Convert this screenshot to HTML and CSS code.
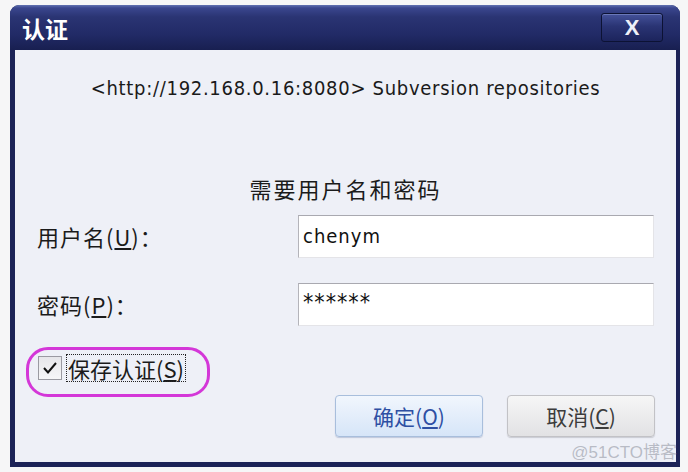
FILE: index.html
```html
<!DOCTYPE html>
<html lang="zh-CN">
<head>
<meta charset="utf-8">
<title>认证</title>
<link rel="stylesheet" href="styles.css">
</head>
<body>
<div class="window">
  <div class="titlebar">
    <span class="title">认证</span>
    <span class="close">X</span>
  </div>
  <div class="content">
    <div class="url">&lt;http://192.168.0.16:8080&gt; Subversion repositories</div>
    <div class="heading">需要用户名和密码</div>
    <div class="form">
      <div class="label">用户名(<u>U</u>)：</div>
      <div class="field">chenym</div>
      <div class="label">密码(<u>P</u>)：</div>
      <div class="field pw">******</div>
    </div>
    <div class="save">
      <span class="box">
        <svg width="16" height="14" viewBox="0 0 16 14"><polyline points="2,7 6,11.5 14,2" fill="none" stroke="#111" stroke-width="2"/></svg>
      </span>
      <span class="savetext">保存认证(<u>S</u>)</span>
      <span class="ring"></span>
    </div>
    <div class="buttons">
      <span class="btn ok">确定(<u>O</u>)</span>
      <span class="btn cancel">取消(<u>C</u>)</span>
    </div>
  </div>
  <div class="watermark">@51CTO博客</div>
</div>
</body>
</html>
```
FILE: styles.css
```css
html, body {
  margin: 0;
  padding: 0;
}
body {
  width: 688px;
  height: 472px;
  overflow: hidden;
  background: #f6f6f7;
  font-family: "Noto Sans CJK SC", sans-serif;
}
.window {
  position: relative;
  margin: 5px 0 0 10px;
  width: 670px;
  height: 462px;
  background: #1c2357;
  border-radius: 9px 9px 0 0;
  display: flex;
  flex-direction: column;
}
.titlebar {
  height: 45px;
  flex: none;
  display: flex;
  align-items: center;
  justify-content: space-between;
  padding: 0 17px 0 12px;
  border-radius: 9px 9px 0 0;
  background: linear-gradient(#6272b2 0px, #3a468e 3px, #2a3473 12px, #212a66 30px, #181f50 45px);
}
.title {
  color: #fff;
  font-size: 23px;
  font-weight: bold;
  line-height: 28px;
}
.close {
  width: 60px;
  height: 27px;
  border: 1px solid #0c1234;
  border-radius: 3px;
  background: linear-gradient(#44529a, #2a3474 45%, #1c245c);
  box-shadow: inset 0 1px 0 #6a78b8;
  color: #eef0f8;
  font-family: "Liberation Sans", sans-serif;
  font-weight: bold;
  font-size: 22px;
  line-height: 27px;
  text-align: center;
}
.content {
  flex: 1;
  margin: 0 4px 5px 5px;
  background: #eef0f7;
  padding: 26px 22px 0 22px;
  color: #1b1b1b;
}
.url {
  font-family: "DejaVu Sans Condensed", "DejaVu Sans", sans-serif;
  font-stretch: condensed;
  font-size: 20px;
  letter-spacing: 0.7px;
  line-height: 24px;
  text-align: center;
  color: #1a1a1a;
}
.heading {
  margin-top: 74px;
  font-size: 22px;
  letter-spacing: 2px;
  line-height: 28px;
  text-align: center;
}
.form {
  margin-top: 12px;
  display: grid;
  grid-template-columns: 261px 356px;
  grid-auto-rows: 44px;
  row-gap: 24px;
  align-items: center;
}
.label {
  font-size: 22px;
  line-height: 28px;
  letter-spacing: 1px;
}
.label u, .savetext u, .btn u {
  text-underline-offset: 2px;
}
.field {
  height: 43px;
  box-sizing: border-box;
  background: #fff;
  border: 1px solid #e4e4e8;
  border-top-color: #a9a9b0;
  border-left-color: #b4b4ba;
  padding: 8px 0 0 4px;
  font-family: "DejaVu Sans Condensed", "DejaVu Sans", sans-serif;
  font-stretch: condensed;
  font-size: 20px;
  letter-spacing: 1px;
  line-height: 24px;
  color: #111;
}
.field.pw {
  font-size: 23px;
  letter-spacing: 1px;
  padding-top: 6px;
}
.save {
  position: relative;
  margin-top: 30px;
  height: 24px;
  display: flex;
  align-items: center;
  gap: 5px;
  padding-left: 1px;
}
.box {
  width: 22px;
  height: 22px;
  border: 1px solid #9a9aa2;
  background: linear-gradient(#e6e6ea, #f6f6f8);
  display: flex;
  align-items: center;
  justify-content: center;
}
.savetext {
  font-size: 22px;
  line-height: 26px;
  outline: 1px dotted #222;
  padding: 0 1px;
}
.ring {
  position: absolute;
  left: -11px;
  top: -9px;
  width: 178px;
  height: 44px;
  border: 3px solid #d437d8;
  border-radius: 22px;
}
.buttons {
  margin-top: 15px;
  display: flex;
  justify-content: flex-end;
  gap: 24px;
  margin-right: -1px;
}
.btn {
  width: 146px;
  height: 40px;
  border: 1px solid #b9c3d2;
  border-radius: 4px;
  font-size: 21px;
  line-height: 40px;
  text-align: center;
}
.ok {
  background: linear-gradient(#f1f6fd, #d6e5f8);
  border-color: #a8bedc;
  color: #2e4fa3;
  box-shadow: 0 1px 1px rgba(120,140,180,0.4);
}
.cancel {
  background: linear-gradient(#f6f6f6, #e2e2e4);
  border-color: #c2c2c6;
  color: #3c3c3c;
  box-shadow: 0 1px 1px rgba(120,120,130,0.3);
}
.watermark {
  position: absolute;
  right: 3px;
  bottom: 5px;
  font-family: "Liberation Sans", "Noto Sans CJK SC", sans-serif;
  font-size: 17px;
  line-height: 18px;
  color: rgba(175, 178, 188, 0.85);
}
```
